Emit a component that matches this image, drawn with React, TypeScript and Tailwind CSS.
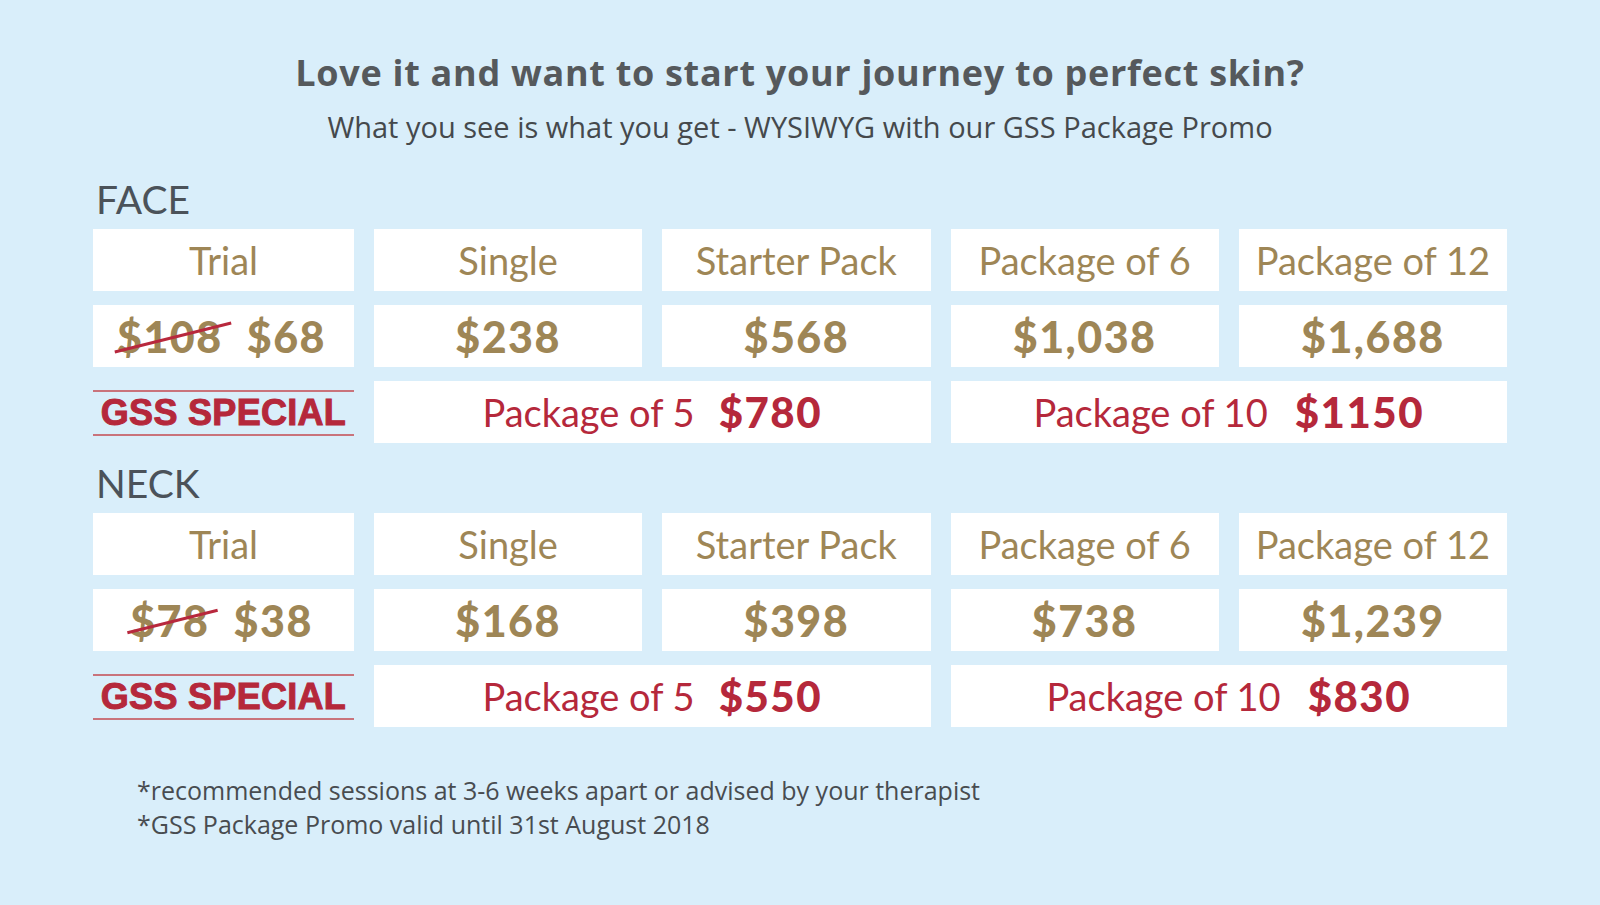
import React from "react";

type Section = {
  label: string;
  oldTrial: string;
  trial: string;
  prices: string[];
  pack5: string;
  pack10: string;
};

const headers = ["Single", "Starter Pack", "Package of 6", "Package of 12"];

const sections: Section[] = [
  { label: "FACE", oldTrial: "$108", trial: "$68", prices: ["$238", "$568", "$1,038", "$1,688"], pack5: "$780", pack10: "$1150" },
  { label: "NECK", oldTrial: "$78", trial: "$38", prices: ["$168", "$398", "$738", "$1,239"], pack5: "$550", pack10: "$830" },
];

const cell = "bg-white h-[62px] flex items-center justify-center";
const head = "text-[38px] leading-none text-[#9e8656] font-['Lato',sans-serif]";
const price = "text-[43px] leading-none font-black tracking-[1.5px] text-[#9e8656] font-['Lato',sans-serif]";
const red = "text-[#b5283b] font-['Lato',sans-serif] leading-none";

function PriceTable({ s, first }: { s: Section; first: boolean }) {
  return (
    <div className={first ? "" : "mt-[21px]"}>
      <h2 className="text-[39px] leading-none text-[#4b5259] font-['Lato',sans-serif] pl-[3px] mb-[10px]">{s.label}</h2>
      <div className="grid grid-cols-[261px_repeat(4,minmax(0,1fr))] gap-x-5 gap-y-[14px]">
        <div className={cell}>
          <span className={head}>Trial</span>
        </div>
        {headers.map((h) => (
          <div key={h} className={cell}>
            <span className={head}>{h}</span>
          </div>
        ))}

        <div className={cell + " gap-6 pr-[4px]"}>
          <span className={price + " relative"}>
            {s.oldTrial}
            <span className="absolute left-[-4px] right-[-10px] top-1/2 h-[3px] bg-[#b8283d] -rotate-[14deg]" />
          </span>
          <span className={price}>{s.trial}</span>
        </div>
        {s.prices.map((p, i) => (
          <div key={i} className={cell}>
            <span className={price}>{p}</span>
          </div>
        ))}

        <div className="h-[62px] pt-[9px]">
          <div className="h-[46px] border-y-2 border-[#c9737b] flex items-center justify-center">
            <span className="text-[36px] leading-none font-bold tracking-[0.3px] text-[#b5283b] font-['Liberation_Sans',Arial,sans-serif] [-webkit-text-stroke:1px_#b5283b]">
              GSS SPECIAL
            </span>
          </div>
        </div>
        <div className={cell + " col-span-2 gap-6"}>
          <span className={red + " text-[38px]"}>Package of 5</span>
          <span className={red + " text-[42px] font-black tracking-[1.5px]"}>{s.pack5}</span>
        </div>
        <div className={cell + " col-span-2 gap-[27px]"}>
          <span className={red + " text-[38px]"}>Package of 10</span>
          <span className={red + " text-[42px] font-black tracking-[1.5px]"}>{s.pack10}</span>
        </div>
      </div>
    </div>
  );
}

export default function App() {
  return (
    <div className="min-h-screen w-full bg-[#d9eefa] font-['Open_Sans',sans-serif]">
      <div className="pt-[51px] text-center">
        <h1 className="text-[36px] leading-[43px] font-bold tracking-[0.7px] text-[#55595c]">
          Love it and want to start your journey to perfect skin?
        </h1>
        <p className="mt-[15px] text-[29px] leading-[35px] text-[#45494c]">
          What you see is what you get - WYSIWYG with our GSS Package Promo
        </p>
      </div>

      <div className="px-[93px] mt-[36px]">
        {sections.map((s, i) => (
          <PriceTable key={s.label} s={s} first={i === 0} />
        ))}

        <div className="mt-[46px] pl-[44px] text-[25px] leading-[34px] text-[#484c50]">
          <p>*recommended sessions at 3-6 weeks apart or advised by your therapist</p>
          <p>*GSS Package Promo valid until 31st August 2018</p>
        </div>
      </div>
    </div>
  );
}
